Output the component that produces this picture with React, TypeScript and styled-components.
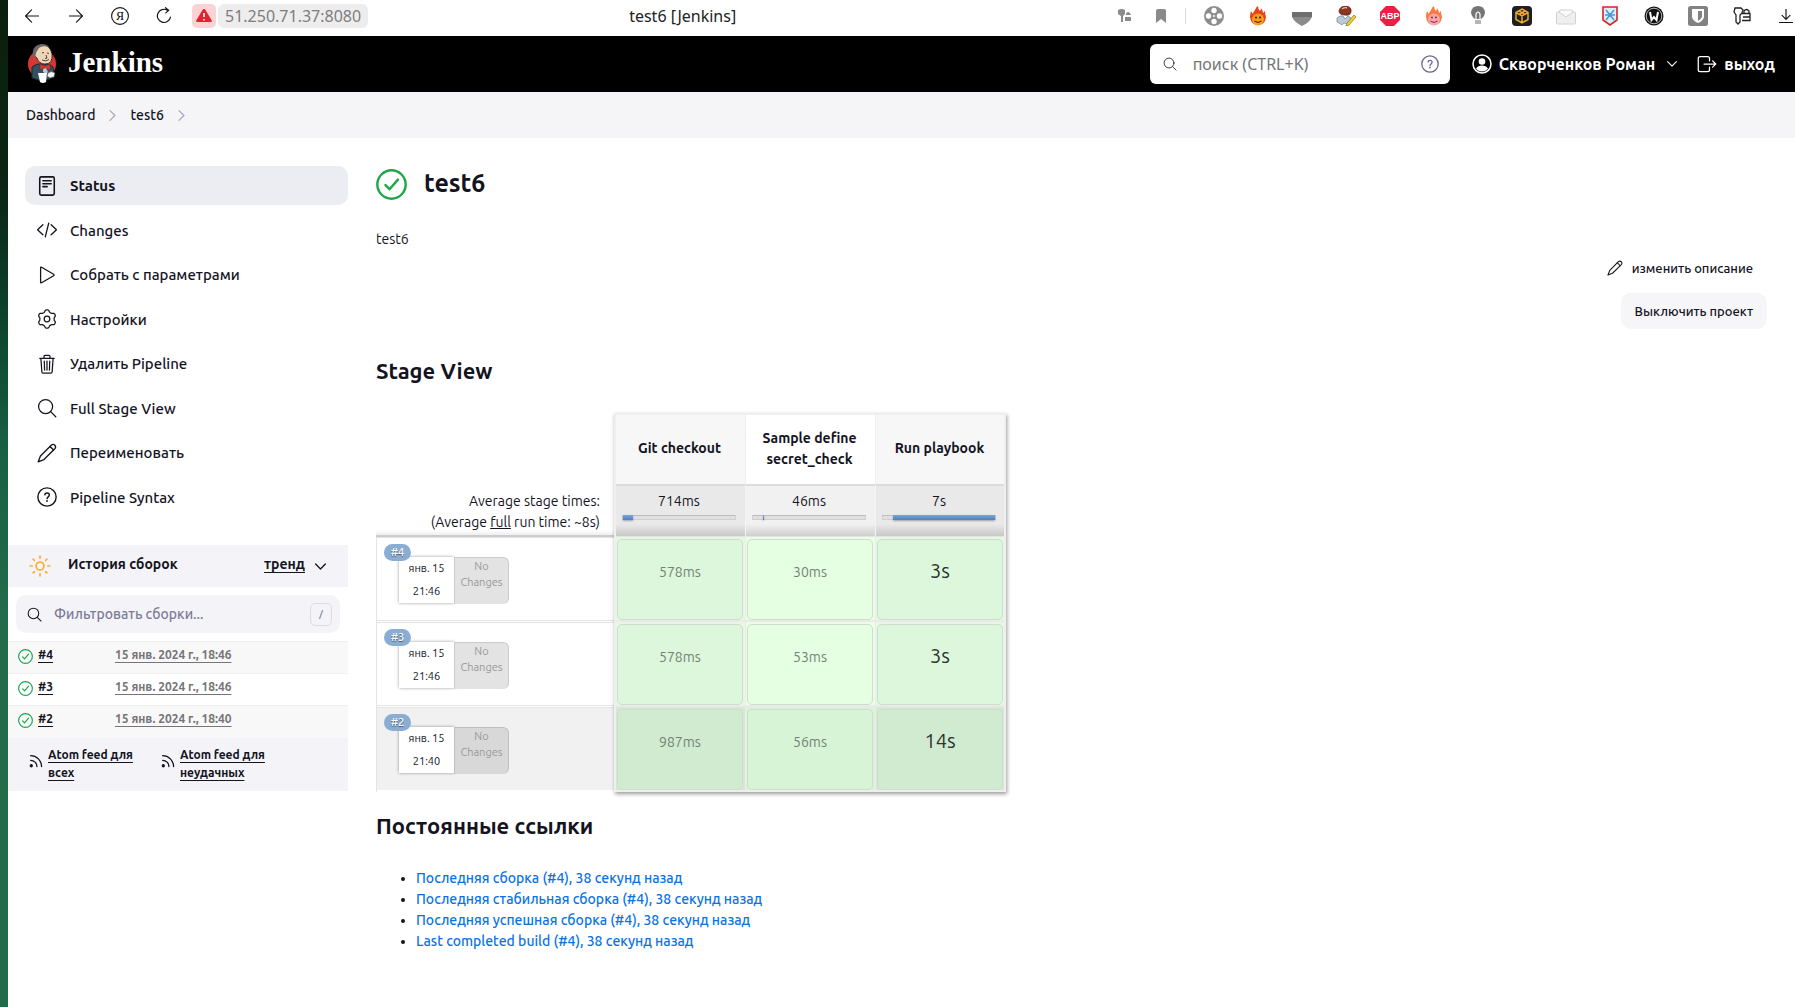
import React from "react";
import styled, { createGlobalStyle, css } from "styled-components";

const ink = "#14141f";

const GlobalStyle = createGlobalStyle`
  * { box-sizing: border-box; }
  html, body { margin: 0; padding: 0; background: #fff; }
  body {
    font-family: "Ubuntu", "Noto Sans", sans-serif;
    font-size: 14px;
    line-height: 21px;
    color: ${ink};
  }
  button, input { font-family: inherit; color: inherit; }
  h1, h2, ul { margin: 0; padding: 0; }
  svg { display: block; flex: none; }
  a { color: inherit; }
`;

const Shell = styled.div`
  display: grid;
  grid-template-columns: 8px minmax(0, 1fr);
  min-height: 100vh;
`;

const Desktop = styled.div`
  background: linear-gradient(#0b200b 0, #0a2412 180px, #0b3a26 280px, #0e4b30 350px, #196043 450px, #246b4a 620px, #246b4a 100%);
`;

const Window = styled.div`
  background: #fff;
  border-top-left-radius: 4px;
`;

/* browser chrome */

const BrowserBar = styled.div`
  display: flex;
  align-items: center;
  height: 36px;
  padding: 0 0 8px 2px;
`;

const Slot = styled.button<{ $w?: number; $end?: boolean }>`
  display: flex;
  align-items: center;
  justify-content: ${(p) => (p.$end ? "flex-end" : "center")};
  width: ${(p) => p.$w ?? 44}px;
  height: 28px;
  padding: ${(p) => (p.$end ? "4px 2px 0 0" : "4px 0 0")};
  border: 0;
  background: none;
`;

const Warning = styled.button`
  display: flex;
  align-items: center;
  justify-content: center;
  width: 24px;
  height: 24px;
  margin: 4px 2px 0 6px;
  padding: 0;
  border: 0;
  border-radius: 5px;
  background: #fbd3d5;
`;

const Address = styled.span`
  height: 24px;
  margin-top: 4px;
  padding: 0 7px;
  border-radius: 6px;
  background: #ededed;
  color: #7d7d7d;
  font: 16px/24px "Noto Sans", sans-serif;
`;

const TabTitle = styled.span`
  margin: 4px 0 0 261px;
  font: 16px/24px "Noto Sans", sans-serif;
  color: #222;
`;

const Tools = styled.div`
  display: flex;
  margin-left: auto;
`;

const Divider = styled.span`
  width: 1px;
  height: 16px;
  margin: 8px 6px 0;
  background: #ddd;
`;

/* header */

const Header = styled.header`
  display: flex;
  align-items: center;
  height: 56px;
  padding: 0 20px;
  background: #000;
  color: #fff;
`;

const Brand = styled.a`
  display: flex;
  align-items: center;
  gap: 12px;
  margin-right: auto;
  color: #fff;
  text-decoration: none;
  font: bold 29px/36px "Liberation Serif", serif;
`;

const BrandName = styled.span`
  padding-bottom: 4px;
`;

const SearchBox = styled.label`
  display: flex;
  align-items: center;
  width: 300px;
  height: 40px;
  padding: 0 11px 0 13px;
  border-radius: 6px;
  background: #fff;
  color: ${ink};
`;

const SearchInput = styled.input`
  flex: 1;
  min-width: 0;
  padding: 0 16px;
  border: 0;
  outline: 0;
  background: none;
  font: 16px/24px "Noto Sans", sans-serif;
  &::placeholder { color: #757575; opacity: 1; }
`;

const HeaderLink = styled.a<{ $gap: number }>`
  display: flex;
  align-items: center;
  gap: 7px;
  margin-left: ${(p) => p.$gap}px;
  color: #fff;
  text-decoration: none;
  font-size: 16px;
  font-weight: 700;
`;

const Crumbs = styled.nav`
  display: flex;
  align-items: center;
  gap: 12px;
  height: 46px;
  padding: 0 18px;
  background: #f5f5f8;
  font-size: 14px;
  font-weight: 550;
  a { text-decoration: none; }
`;

/* page */

const Columns = styled.div`
  display: grid;
  grid-template-columns: 340px minmax(0, 1fr);
  column-gap: 28px;
  padding: 28px 28px 0 0;
`;

const Tasks = styled.nav`
  display: flex;
  flex-direction: column;
  justify-content: space-between;
  min-height: 351px;
  padding-left: 17px;
  margin-bottom: 28px;
`;

const Task = styled.a<{ $active?: boolean }>`
  display: flex;
  align-items: center;
  gap: 13px;
  height: 39px;
  padding: 0 12px;
  border-radius: 10px;
  font-size: 15px;
  font-weight: ${(p) => (p.$active ? 700 : 550)};
  background: ${(p) => (p.$active ? "#ecedf3" : "none")};
  text-decoration: none;
`;

const HistoryHead = styled.div`
  display: flex;
  align-items: center;
  height: 42px;
  padding: 0 22px 0 21px;
  background: #f3f3f8;
  font-weight: 700;
  a { margin: 0 10px 0 auto; padding-bottom: 3px; text-underline-offset: 3px; }
`;

const HistoryTitle = styled.span`
  margin-left: 17px;
  padding-bottom: 3px;
`;

const FilterBox = styled.label`
  display: flex;
  align-items: center;
  height: 38px;
  margin: 8px 8px;
  padding: 0 8px 0 11px;
  border-radius: 10px;
  background: #f3f3f8;
`;

const FilterInput = styled.input`
  flex: 1;
  min-width: 0;
  padding: 0 12px;
  border: 0;
  outline: 0;
  background: none;
  font-size: 14px;
  font-weight: 550;
  &::placeholder { color: #7c7c96; opacity: 1; }
`;

const Key = styled.kbd`
  width: 22px;
  height: 23px;
  border: 1px solid #dcdce6;
  border-radius: 5px;
  color: #7c7c96;
  font: 12px/21px "Noto Sans", sans-serif;
  text-align: center;
`;

const Builds = styled.table`
  width: 100%;
  border-collapse: collapse;
  table-layout: fixed;
  font-size: 12px;
  font-weight: 700;
  tr { height: 32px; border-top: 1px solid #f0f0f0; }
  tr:nth-child(odd) { background: #f8f8f8; }
  td { padding: 0 0 6px; vertical-align: middle; }
  td:first-child { width: 107px; padding-left: 10px; }
  a { text-underline-offset: 3px; }
  td:last-child a { color: #757578; }
`;

const BuildRef = styled.span`
  display: flex;
  align-items: center;
  gap: 5px;
  svg { margin-top: 3px; }
`;

const Feeds = styled.div`
  display: grid;
  grid-template-columns: 132px 132px;
  height: 53px;
  padding: 8px 21px;
  background: #f3f3f8;
  font-size: 12px;
  line-height: 18px;
  font-weight: 700;
`;

const Feed = styled.a`
  display: flex;
  align-items: flex-start;
  gap: 5px;
  padding-right: 20px;
  text-underline-offset: 3px;
  svg { margin-top: 8px; }
`;

const Main = styled.main`
  display: flex;
  flex-direction: column;
`;

const TitleRow = styled.div`
  display: flex;
  align-items: center;
  gap: 17px;
  height: 36px;
  margin-bottom: 27px;
`;

const Title = styled.h1`
  padding-bottom: 3px;
  font-size: 25px;
  line-height: 30px;
`;

const SideAction = styled.button<{ $filled?: boolean }>`
  display: flex;
  align-items: center;
  align-self: flex-end;
  gap: 9px;
  height: 36px;
  padding: 0 14px;
  border: 0;
  border-radius: 10px;
  background: ${(p) => (p.$filled ? "#f6f6f9" : "none")};
  font-size: 13px;
  font-weight: 550;
  margin-top: ${(p) => (p.$filled ? 7 : 0)}px;
`;

const Heading = styled.h2<{ $top: number }>`
  margin: ${(p) => p.$top}px 0 27px;
  font-size: 22px;
  line-height: 30px;
`;

/* stage view */

const StageWrap = styled.div`
  position: relative;
  align-self: flex-start;
`;

const StageFrame = styled.div`
  position: absolute;
  inset: 0 0 0 238px;
  border: 2px solid #efeff0;
  box-shadow: 1px 2px 4px rgba(0, 0, 0, 0.4);
  pointer-events: none;
`;

const StageTable = styled.table`
  border-collapse: separate;
  border-spacing: 0;
  table-layout: fixed;
  width: 630px;
  text-align: center;
  th, td { padding: 0; }
`;

const alt = (odd: string, even: string) => css`
  background-color: ${odd};
  &:nth-child(odd) { background-color: ${even}; }
`;

const StageHead = styled.th`
  height: 71px;
  border-right: 1px solid #f0f0f0;
  && { padding-right: 2px; }
  ${alt("#f7f7f7", "#fff")}
`;

const AverageLabel = styled.td`
  height: 53px;
  border-bottom: 2px solid #ccc;
  background: linear-gradient(transparent 46px, #eee);
  text-align: right;
  vertical-align: top;
  && { padding: 7px 16px 0 0; }
`;

const Average = styled.td`
  border-top: 2px solid #dcdcdc;
  border-right: 1px solid #f4f4f4;
  border-bottom: 1px solid #e4e4e4;
  background-image: linear-gradient(transparent 38px, rgba(0, 0, 0, 0.14));
  vertical-align: top;
  ${alt("#e9e9e9", "#f1f1f1")}
  && { padding: 5px 9px 0 6px; }
`;

const Bar = styled.div`
  display: flex;
  height: 5px;
  margin-top: 3px;
  background: #e0e0e0;
  border: 1px solid #cfcfcf;
  border-top-color: #bdbdbd;
`;

const BarFill = styled.div`
  height: 5px;
  margin-top: -1px;
  background: linear-gradient(#7ba4da, #4a7fcf);
  box-shadow: 0 1px 2px rgba(0, 0, 0, 0.3);
`;

const RunCell = styled.td<{ $dark?: boolean }>`
  height: 85px;
  border: solid #e4e4e4;
  border-width: 1px 0 0 1px;
  background: ${(p) => (p.$dark ? "#f1f1f1" : "#fff")};
  box-shadow: ${(p) => (p.$dark ? "inset 0 -2px #fff" : "inset 0 -1px #fff, inset 0 -2px #e4e4e4")};
  vertical-align: top;
  && { padding: 6px 0 0 7px; }
`;

const RunBadge = styled.a`
  display: block;
  position: relative;
  width: 27px;
  height: 17px;
  border-radius: 9px;
  background: #8aaed3;
  color: #fff;
  font-size: 11px;
  line-height: 17px;
  font-weight: 500;
  text-align: center;
  text-decoration: none;
  text-shadow: 0 1px 1px #456;
`;

const RunInfo = styled.div`
  display: flex;
  margin: -4px 0 0 15px;
`;

const RunDate = styled.div`
  width: 55px;
  height: 46px;
  background: #fff;
  box-shadow: 0 0 3px rgba(0, 0, 0, 0.4);
  font-size: 11px;
  line-height: 23px;
`;

const NoChanges = styled.div<{ $dark?: boolean }>`
  width: 55px;
  height: 47px;
  border: 1px solid ${(p) => (p.$dark ? "#bfbfbf" : "#cacaca")};
  border-width: 1px 1px 0 1px;
  border-radius: 0 6px 6px 0;
  background: ${(p) => (p.$dark ? "#d8d8d8" : "#e3e3e3")};
  color: #999;
  font-size: 11px;
  line-height: 16px;
`;

const StageCell = styled.td<{ $dark?: boolean }>`
  height: 85px;
  border-right: 1px solid #ececec;
  border-bottom: 2px solid #e9ebe9;
  ${(p) => (p.$dark ? alt("#d3e9d2", "#daf2d9") : alt("#e4f8e2", "#e9fde7"))}
`;

const StageCard = styled.div<{ $dark?: boolean; $mid?: boolean; $long?: boolean }>`
  height: 81px;
  margin: 1px 2px 0 1px;
  padding-top: ${(p) => (p.$long ? 20 : 22)}px;
  border: 1px solid #d0dccf;
  border-radius: 5px;
  background: ${(p) => (p.$dark ? (p.$mid ? "#d8f4d7" : "#d1ebd0") : p.$mid ? "#e4ffe2" : "#ddf7dc")};
  color: ${(p) => (p.$long ? "#2c322e" : "#748275")};
  font-size: ${(p) => (p.$long ? 20 : 14)}px;
`;

const Links = styled.ul`
  && { padding-left: 40px; }
  li { font-weight: 550; }
  a { color: #0a72e6; text-decoration: none; }
`;

/* icons */

type IconProps = { s?: number; w?: number; children: React.ReactNode; color?: string };
const Line = ({ s = 20, w = 32, color = "currentColor", children }: IconProps) => (
  <svg width={s} height={s} viewBox="0 0 512 512" fill="none" stroke={color} strokeWidth={w} strokeLinecap="round" strokeLinejoin="round">
    {children}
  </svg>
);

const Lens = ({ s = 20, w = 32 }: { s?: number; w?: number }) => (
  <Line s={s} w={w}><circle cx="220" cy="220" r="180" /><path d="M350 350 480 480" /></Line>
);
const Pencil = ({ s = 20 }: { s?: number }) => (
  <Line s={s} w={34}>
    <path d="M358 62 Q410 14 456 56 Q498 102 450 154 L178 424 L30 482 L88 334 Z" />
    <path d="M330 92 Q380 120 420 182 M394 150 L346 106" />
  </Line>
);
const Help = ({ s = 20, color }: { s?: number; color?: string }) => (
  <Line s={s} color={color} w={36}>
    <circle cx="256" cy="256" r="234" />
    <path d="M200 202c2-66 116-68 116 4 0 46-58 48-58 92" />
    <circle cx="256" cy="356" r="8" />
  </Line>
);
const Check = ({ s }: { s: number }) => (
  <Line s={s} color="#1ea64b" w={40}><circle cx="256" cy="256" r="234" /><path d="M362 176 224 334 156 266" /></Line>
);
const Chevron = ({ d, color, s = 10, w = 44 }: { d: "r" | "d"; color?: string; s?: number; w?: number }) => (
  <Line s={s} w={w} color={color}><path d={d === "r" ? "M140 30 370 256 140 482" : "M30 140 256 370 482 140"} /></Line>
);
const Rss = () => (
  <Line s={14} w={48}>
    <path d="M60 60a400 400 0 0 1 400 400M60 230a230 230 0 0 1 230 230" />
    <circle cx="84" cy="430" r="36" fill="currentColor" />
  </Line>
);

const gearPath = () => {
  const pts: string[] = [];
  for (let i = 0; i <= 72; i++) {
    const a = (i / 72) * Math.PI * 2;
    const r = 208 + 26 * Math.tanh(2 * Math.cos(6 * a));
    pts.push(`${Math.round(256 + r * Math.sin(a))} ${Math.round(256 - r * Math.cos(a))}`);
  }
  return `M${pts.join("L")}Z`;
};

const taskIcons: Record<string, React.ReactNode> = {
  status: <Line w={40}><rect x="70" y="22" width="372" height="468" rx="40" /><path d="M150 120h212M150 196h212M150 272h110" /></Line>,
  code: <Line w={34}><path d="M150 120 14 250 150 380M362 120 498 250 362 380M300 80 212 430" /></Line>,
  play: <Line><path d="M92 70v372c0 14 12 20 24 14l310-182c14-8 14-28 0-36L116 56c-12-6-24 0-24 14z" /></Line>,
  gear: <Line><path d={gearPath()} /><circle cx="256" cy="256" r="72" /></Line>,
  trash: <Line><path d="M70 110h372M100 112l24 344c2 22 14 34 34 34h196c20 0 32-12 34-34l24-344M180 108V60c0-18 10-28 28-28h96c18 0 28 10 28 28v48M256 180v232M186 180l8 232M326 180l-8 232" /></Line>,
  lens: <Lens />,
  pencil: <Pencil />,
  help: <Help />,
};

const Butler = () => (
  <svg width="28" height="40" viewBox="0 0 28 40">
    <ellipse cx="14" cy="20" rx="14" ry="14" fill="#d33833" />
    <path d="M4 34V23q5-4 9-3 8-1 12 3l1 7-4 5-8 2z" fill="#335061" stroke="#182830" />
    <path d="M6 8Q8 1 15 1q7 0 9 9 1 10-7 10-6 0-8-6-4-2-3-6z" fill="#f0d6b7" stroke="#231f20" strokeWidth=".8" />
    <path d="M5 13Q3 2 13 0q6 0 8 3-7-2-10 1-2 3-3 5l-1 5z" fill="#6b6668" />
    <path d="m14 9 2-.5M19 9l2 .5M18 11l1 3-2 .5M14 16q4 2 7-.5" fill="none" stroke="#231f20" strokeWidth=".8" />
    <path d="m12 20 5 2 5-2v6l-5-2-5 2z" fill="#d33833" stroke="#81201d" strokeWidth=".6" />
    <path d="m15 25 3-1 2 4-2 2-3-2z" fill="#b8c9d3" />
    <path d="M10 29h9l-1 9q-3 2-6 0z" fill="#fff" />
    <path d="M20 29q3-3 7 0l-1 4-4 1-3-2z" fill="#f2f2f2" stroke="#555" strokeWidth=".7" />
  </svg>
);

const Ext = ({ children }: { children: React.ReactNode }) => (
  <svg width="20" height="20" viewBox="0 0 20 20" fill="none">{children}</svg>
);
const flame = "M10 0q0 3 2 5 1-1 1-3 2 3 2 5l2-2q0 3 1 6-1 8-8 8t-8-8q0-3 1-6l2 3q0-2 2-4 1-3 3-4z";
const Fire = ({ a, b, c }: { a: string; b: string; c: string }) => (
  <Ext>
    <path d={flame} fill={a} />
    <circle cx="10" cy="13.500" r="6" fill={b} />
    <circle cx="8" cy="11.500" r="1" fill={c} /><circle cx="12" cy="11.500" r="1" fill={c} />
    <path d="M6.500 15q3.500 3 7 0" stroke={c} />
  </Ext>
);

const reel = [[10, 4.5], [15.5, 10], [10, 15.5], [4.5, 10]];

const extensions: [string, React.ReactNode][] = [
  ["Video", <Ext><circle cx="10" cy="10" r="10" fill="#8d8d8d" />{reel.map(([x, y]) => <circle key={`${x}-${y}`} cx={x} cy={y} r="2.7" fill="#fff" />)}<circle cx="10" cy="10" r="1" fill="#fff" /></Ext>],
  ["Flame", <Fire a="#e5451b" b="#fb9a1d" c="#3a1600" />],
  ["Pocket", <Ext><path d="M0 6h20v5q-3 6-10 9Q3 17 0 11z" fill="#8b8b8b" /><path d="M0 6h20v5H0z" fill="#6e6e6e" /></Ext>],
  ["Editor", <Ext><path d="M1 12q3-3 6-2l2 3 3-3 3 2-3 6-4-1-2 2-3-2-2-1z" fill="#b9cbd8" stroke="#71879a" strokeWidth=".7" /><path d="M3 5q1-5 7-5 6 1 5 6-1 4-6 3-6 0-6-4z" fill="#8c3420" stroke="#4c180e" strokeWidth=".7" /><path d="M6 3q3-2 5-1" stroke="#e9b9a8" strokeWidth="1.4" /><path d="m18 9 2 2-7 8-3 1 1-3z" fill="#f5d032" stroke="#8a6a10" strokeWidth=".7" /></Ext>],
  ["Adblock Plus", <Ext><path d="M6 0h8l6 6v8l-6 6H6l-6-6V6z" fill="#ed1e45" /><text x="10" y="13" fill="#fff" fontSize="9" fontWeight="700" fontFamily="Liberation Sans, sans-serif" textAnchor="middle">ABP</text></Ext>],
  ["Flame 2", <Fire a="#fb7a3f" b="#f8a5ad" c="#7c3030" />],
  ["Lamp", <Ext><path d="M3 6q1-6 7-6t7 6q0 4-4 7H7Q3 10 3 6z" fill="#757575" /><path d="M8 13V8q2-4 4 0v5" stroke="#fff" strokeWidth="1.2" /><path d="M7 14h6v4H7z" fill="#b5b5b5" /></Ext>],
  ["Cube", <Ext><rect width="20" height="20" rx="4" fill="#1c1f24" /><path d="m10 3 6 3.500v7L10 17l-6-3.500v-7zM4 6.500l6 3.500 6-3.500M10 10v7M7 5l6 3.500M13 5 7 8.500" stroke="#f0ad1c" strokeWidth="1.500" /></Ext>],
  ["Mail", <Ext><rect x=".5" y="6" width="19" height="12" rx="1" fill="#efefef" stroke="#d2d2d2" /><path d="m3 6 1-2h12l1 2-7 5z" fill="#fafafa" stroke="#cfcfcf" /></Ext>],
  ["Shield", <Ext><path d="M3 1h14v13l-7 5-7-5z" fill="#dceefa" stroke="#d8232a" strokeWidth="1.6" /><path d="m6 4 8 10M14 4 6 14M5 9h3M12 9h3" stroke="#4a9bd4" strokeWidth="1.6" /><circle cx="10" cy="9" r="2" fill="#4a9bd4" /></Ext>],
  ["W", <Ext><circle cx="10" cy="10" r="9.5" fill="#111" /><circle cx="10" cy="10" r="7.8" stroke="#fff" strokeWidth=".7" /><path d="m6 6 1.500 8L10 11l2.500 3L14 6" stroke="#fff" strokeWidth="2" /></Ext>],
  ["Bitwarden", <Ext><rect width="20" height="20" rx="2.500" fill="#828282" /><path d="M4 3h12v8q-1 4-6 6-5-2-6-6z" fill="#fff" /><path d="M10 5h4v6q-1 2-4 4z" fill="#828282" /></Ext>],
  ["Passwords", <Ext><path d="M3 2h6l2 2-1 3-2 2v7l-2 2-2-2V9L2 6z" stroke="#222" strokeWidth="1.3" /><path d="M12 7V5q2.500-3 5 0v2M10 7.500h8v7h-8M11 11h7" stroke="#222" strokeWidth="1.300" /></Ext>],
];

const User = () => (
  <svg width="20" height="20" viewBox="0 0 20 20"><circle cx="10" cy="10" r="9" fill="none" stroke="#fff" strokeWidth="1.5" /><circle cx="10" cy="7.500" r="3.300" fill="#fff" /><path d="M4 14.500q2-3 6-3t6 3q-2 3-6 3t-6-3z" fill="#fff" /></svg>
);
const Exit = () => (
  <Line><path d="M320 176v-64c0-30-18-48-48-48H80c-30 0-48 18-48 48v290c0 30 18 48 48 48h192c30 0 48-18 48-48v-64M180 256h300M400 176l80 80-80 80" /></Line>
);
const Sun = () => (
  <Line s={22} color="#fbb034" w={40}>
    <circle cx="256" cy="256" r="92" />
    <path d="M256 28v46M256 438v46M28 256h46M438 256h46M95 95l32 32M385 385l32 32M95 417l32-32M385 127l32-32" />
  </Line>
);

const tasks: [string, string][] = [
  ["status", "Status"],
  ["code", "Changes"],
  ["play", "Собрать с параметрами"],
  ["gear", "Настройки"],
  ["trash", "Удалить Pipeline"],
  ["lens", "Full Stage View"],
  ["pencil", "Переименовать"],
  ["help", "Pipeline Syntax"],
];

const builds = [
  { id: "#4", date: "15 янв. 2024 г., 18:46" },
  { id: "#3", date: "15 янв. 2024 г., 18:46" },
  { id: "#2", date: "15 янв. 2024 г., 18:40" },
];

const stages = [
  { name: "Git checkout", avg: "714ms", offset: 0, size: 9 },
  { name: "Sample define secret_check", avg: "46ms", offset: 9, size: 1 },
  { name: "Run playbook", avg: "7s", offset: 9, size: 91 },
];

const runs = [
  { id: "#4", time: "21:46", times: ["578ms", "30ms", "3s"] },
  { id: "#3", time: "21:46", times: ["578ms", "53ms", "3s"] },
  { id: "#2", time: "21:40", times: ["987ms", "56ms", "14s"], dark: true },
];

const permalinks = [
  "Последняя сборка (#4), 38 секунд назад",
  "Последняя стабильная сборка (#4), 38 секунд назад",
  "Последняя успешная сборка (#4), 38 секунд назад",
  "Last completed build (#4), 38 секунд назад",
];

export default function App() {
  return (
    <Shell>
      <GlobalStyle />
      <Desktop />
      <Window>
        <BrowserBar>
          <Slot aria-label="Назад"><Line s={14} w={40}><path d="M500 256H20M240 30 20 256l220 226" /></Line></Slot>
          <Slot aria-label="Вперёд"><Line s={14} w={40}><path d="M12 256h480M272 30l220 226-220 226" /></Line></Slot>
          <Slot aria-label="Яндекс">
            <svg width="18" height="18" viewBox="0 0 18 18"><circle cx="9" cy="9" r="8.400" fill="none" stroke="#111" strokeWidth="1.100" /><text x="9" y="13" fontSize="12" textAnchor="middle" fontFamily="Liberation Serif, serif">Я</text></svg>
          </Slot>
          <Slot aria-label="Обновить"><Line s={18} w={34}><path d="M440 290a188 188 0 1 1-90-200h40M300 20l90 76-84 70" /></Line></Slot>
          <Warning aria-label="Не защищено">
            <svg width="16" height="16" viewBox="0 0 16 16"><path d="M8 1q1 0 1.500 1l6 10q1 2-1 2h-13q-2 0-1-2l6-10Q7 1 8 1z" fill="#e0242f" /><path d="M8 5v4M8 11v1.500" stroke="#fff" strokeWidth="1.600" /></svg>
          </Warning>
          <Address>51.250.71.37:8080</Address>
          <TabTitle>test6 [Jenkins]</TabTitle>
          <Tools>
            <Slot $w={36} aria-label="Ключи"><svg width="14" height="14" viewBox="0 0 14 14" fill="#8a8a8a"><path d="M0 1q4-2 7 0v4L5 7v6H3V7L0 5zM8 6q0-3 2-3t3 3zM7 8h6v4H7z" /></svg></Slot>
            <Slot $w={36} aria-label="Закладка"><svg width="10" height="14" viewBox="0 0 10 14" fill="#8a8a8a"><path d="M0 2q0-2 2-2h6q2 0 2 2v12l-5-4-5 4z" /></svg></Slot>
            <Divider />
            {extensions.map(([name, icon]) => <Slot key={name} aria-label={name}>{icon}</Slot>)}
            <Slot $w={31} $end aria-label="Загрузки"><Line s={14} w={42}><path d="M256 0v370M110 230l146 146 146-146M10 500h492" /></Line></Slot>
          </Tools>
        </BrowserBar>

        <Header>
          <Brand href="#"><Butler /><BrandName>Jenkins</BrandName></Brand>
          <SearchBox>
            <Lens s={14} w={30} />
            <SearchInput type="text" aria-label="поиск" placeholder="поиск (CTRL+K)" />
            <Help s={18} color="#64648c" />
          </SearchBox>
          <HeaderLink href="#" $gap={22}><User />Скворченков Роман</HeaderLink>
          <HeaderLink href="#" $gap={12} aria-label="Меню пользователя"><Chevron d="d" w={56} /></HeaderLink>
          <HeaderLink href="#" $gap={20}><Exit />выход</HeaderLink>
        </Header>

        <Crumbs>
          <a href="#">Dashboard</a>
          <Chevron d="r" s={11} color="#a9a9bd" w={60} />
          <a href="#">test6</a>
          <Chevron d="r" s={11} color="#a9a9bd" w={60} />
        </Crumbs>

        <Columns>
          <aside>
            <Tasks>
              {tasks.map(([icon, label], i) => (
                <Task key={label} href="#" $active={i === 0}>{taskIcons[icon]}{label}</Task>
              ))}
            </Tasks>
            <HistoryHead>
              <Sun />
              <HistoryTitle>История сборок</HistoryTitle>
              <a href="#">тренд</a>
              <Chevron d="d" s={11} w={60} />
            </HistoryHead>
            <FilterBox>
              <Lens s={15} w={36} />
              <FilterInput type="text" aria-label="Фильтровать сборки" placeholder="Фильтровать сборки..." />
              <Key>/</Key>
            </FilterBox>
            <Builds>
              <tbody>
                {builds.map((b) => (
                  <tr key={b.id}>
                    <td><BuildRef><Check s={15} /><a href="#">{b.id}</a></BuildRef></td>
                    <td><a href="#">{b.date}</a></td>
                  </tr>
                ))}
              </tbody>
            </Builds>
            <Feeds>
              <Feed href="#"><Rss />Atom feed для всех</Feed>
              <Feed href="#"><Rss />Atom feed для неудачных</Feed>
            </Feeds>
          </aside>

          <Main>
            <TitleRow><Check s={31} /><Title>test6</Title></TitleRow>
            <div>test6</div>
            <SideAction><Pencil s={16} />изменить описание</SideAction>
            <SideAction $filled>Выключить проект</SideAction>

            <Heading $top={27}>Stage View</Heading>
            <StageWrap>
              <StageTable>
                <colgroup><col width="240" /><col width="130" /><col width="130" /><col width="130" /></colgroup>
                <thead>
                  <tr><td />{stages.map((s) => <StageHead key={s.name} scope="col">{s.name}</StageHead>)}</tr>
                </thead>
                <tbody>
                  <tr>
                    <AverageLabel>Average stage times:<br />(Average <u>full</u> run time: ~8s)</AverageLabel>
                    {stages.map((s) => (
                      <Average key={s.name}>
                        {s.avg}
                        <Bar><BarFill style={{ marginLeft: `${s.offset}%`, width: `${s.size}%` }} /></Bar>
                      </Average>
                    ))}
                  </tr>
                  {runs.map((r) => (
                    <tr key={r.id}>
                      <RunCell $dark={r.dark}>
                        <RunBadge href="#">{r.id}</RunBadge>
                        <RunInfo>
                          <RunDate>янв. 15<br />{r.time}</RunDate>
                          <NoChanges $dark={r.dark}>No<br />Changes</NoChanges>
                        </RunInfo>
                      </RunCell>
                      {r.times.map((t, i) => (
                        <StageCell key={i} $dark={r.dark}>
                          <StageCard $dark={r.dark} $mid={i === 1} $long={i === 2}>{t}</StageCard>
                        </StageCell>
                      ))}
                    </tr>
                  ))}
                </tbody>
              </StageTable>
              <StageFrame />
            </StageWrap>

            <Heading $top={19}>Постоянные ссылки</Heading>
            <Links>
              {permalinks.map((l) => <li key={l}><a href="#">{l}</a></li>)}
            </Links>
          </Main>
        </Columns>
      </Window>
    </Shell>
  );
}
